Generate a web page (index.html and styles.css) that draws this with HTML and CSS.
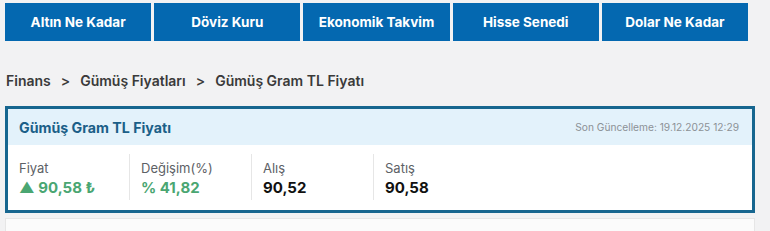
FILE: index.html
```html
<!DOCTYPE html>
<html lang="tr">
<head>
<meta charset="utf-8">
<title>Gümüş Gram TL Fiyatı</title>
<link rel="stylesheet" href="styles.css">
</head>
<body>
<nav class="nav">
  <a class="nav-btn" href="#">Altın Ne Kadar</a>
  <a class="nav-btn" href="#">Döviz Kuru</a>
  <a class="nav-btn" href="#">Ekonomik Takvim</a>
  <a class="nav-btn" href="#">Hisse Senedi</a>
  <a class="nav-btn" href="#">Dolar Ne Kadar</a>
</nav>
<div class="breadcrumb">
  <span>Finans</span><span class="sep">&gt;</span><span>Gümüş Fiyatları</span><span class="sep">&gt;</span><span>Gümüş Gram TL Fiyatı</span>
</div>
<section class="card">
  <header class="card-head">
    <h1 class="card-title">Gümüş Gram TL Fiyatı</h1>
    <span class="updated">Son Güncelleme: 19.12.2025 12:29</span>
  </header>
  <div class="card-body">
    <div class="col">
      <div class="label">Fiyat</div>
      <div class="value up">▲ 90,58 ₺</div>
    </div>
    <div class="col">
      <div class="label">Değişim(%)</div>
      <div class="value up">% 41,82</div>
    </div>
    <div class="col">
      <div class="label">Alış</div>
      <div class="value">90,52</div>
    </div>
    <div class="col last">
      <div class="label">Satış</div>
      <div class="value">90,58</div>
    </div>
  </div>
</section>
<div class="next-box"></div>
</body>
</html>
```
FILE: styles.css
```css
* { box-sizing: border-box; }
html, body { margin: 0; padding: 0; }
body {
  background: #f2f2f3;
  font-family: Inter, "Noto Sans", sans-serif;
  width: 770px;
  height: 231px;
  overflow: hidden;
}
.nav {
  display: flex;
  gap: 3px;
  padding: 3px 22px 0 5px;
}
.nav-btn {
  flex: 1;
  height: 38px;
  background: #0468b0;
  color: #fff;
  font-weight: 700;
  font-size: 13.5px;
  text-decoration: none;
  display: flex;
  align-items: center;
  justify-content: center;
}
.breadcrumb {
  margin-top: 30px;
  padding-left: 6px;
  height: 20px;
  line-height: 20px;
  font-size: 14px;
  font-weight: 600;
  color: #3a3a3a;
}
.breadcrumb .sep { margin: 0 10px; }
.card {
  margin: 15px 15px 0 5px;
  border: 3px solid #17668f;
  background: #fff;
}
.card-head {
  height: 36px;
  background: #e3f2fb;
  display: flex;
  align-items: center;
  justify-content: space-between;
  padding: 0 13px 0 11px;
}
.card-title {
  margin: 0;
  font-size: 14.2px;
  font-weight: 700;
  color: #1b5f88;
}
.updated {
  font-size: 10.2px;
  color: #8c9196;
}
.card-body {
  display: flex;
  padding: 9px 0 10px;
}
.col {
  width: 122px;
  height: 46px;
  padding: 6px 0 0 11px;
  border-right: 1px solid #e6e6e6;
}
.col.last { border-right: 0; }
.label {
  font-size: 13px;
  line-height: 16px;
  color: #5d6166;
}
.value {
  margin-top: 3px;
  font-size: 15px;
  line-height: 18px;
  font-weight: 700;
  color: #111;
}
.value.up { color: #4aa672; }
.next-box {
  margin: 5px 15px 0 5px;
  height: 20px;
  background: #fbfbfb;
  border: 1px solid #e6e6e6;
}
```
